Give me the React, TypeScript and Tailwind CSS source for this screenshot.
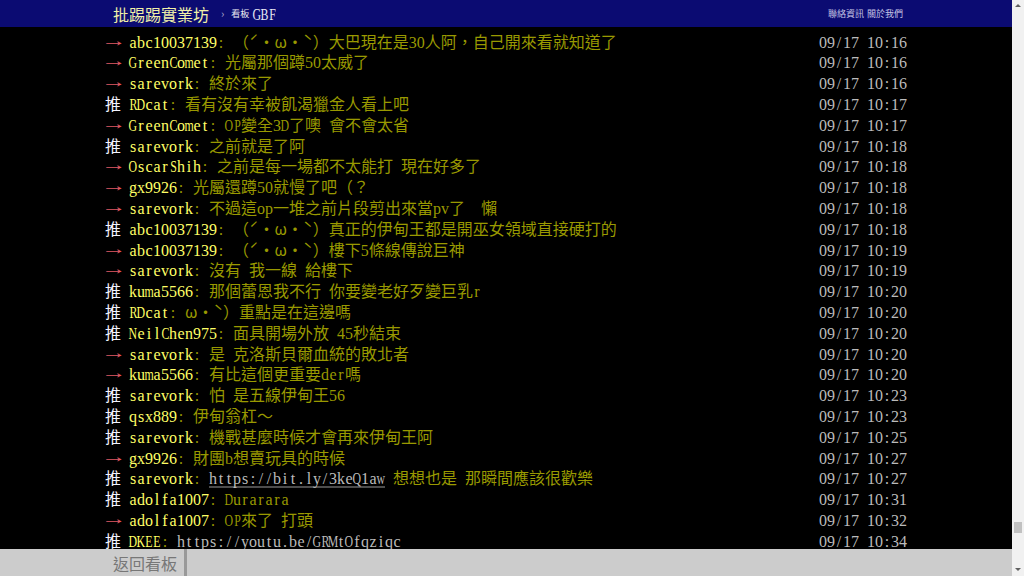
import React from "react";

type Push = { tag: "推" | "→"; user: string; content: string; link?: string; after?: string; time: string };

const rows: Push[] = [
  { tag: "→", user: "abc10037139", content: "（ˊ・ω・ˋ）大巴現在是30人阿，自己開來看就知道了", time: "09/17 10:16" },
  { tag: "→", user: "GreenComet", content: "光屬那個蹲50太威了", time: "09/17 10:16" },
  { tag: "→", user: "sarevork", content: "終於來了", time: "09/17 10:16" },
  { tag: "推", user: "RDcat", content: "看有沒有幸被飢渴獵金人看上吧", time: "09/17 10:17" },
  { tag: "→", user: "GreenComet", content: "OP變全3D了噢 會不會太省", time: "09/17 10:17" },
  { tag: "推", user: "sarevork", content: "之前就是了阿", time: "09/17 10:18" },
  { tag: "→", user: "OscarShih", content: "之前是每一場都不太能打 現在好多了", time: "09/17 10:18" },
  { tag: "→", user: "gx9926", content: "光屬還蹲50就慢了吧（？", time: "09/17 10:18" },
  { tag: "→", user: "sarevork", content: "不過這op一堆之前片段剪出來當pv了  懶", time: "09/17 10:18" },
  { tag: "推", user: "abc10037139", content: "（ˊ・ω・ˋ）真正的伊甸王都是開巫女領域直接硬打的", time: "09/17 10:18" },
  { tag: "→", user: "abc10037139", content: "（ˊ・ω・ˋ）樓下5條線傳說巨神", time: "09/17 10:19" },
  { tag: "→", user: "sarevork", content: "沒有 我一線 給樓下", time: "09/17 10:19" },
  { tag: "推", user: "kuma5566", content: "那個蕾恩我不行 你要變老好歹變巨乳r", time: "09/17 10:20" },
  { tag: "推", user: "RDcat", content: "ω・ˋ）重點是在這邊嗎", time: "09/17 10:20" },
  { tag: "推", user: "NeilChen975", content: "面具開場外放 45秒結束", time: "09/17 10:20" },
  { tag: "→", user: "sarevork", content: "是 克洛斯貝爾血統的敗北者", time: "09/17 10:20" },
  { tag: "→", user: "kuma5566", content: "有比這個更重要der嗎", time: "09/17 10:20" },
  { tag: "推", user: "sarevork", content: "怕 是五線伊甸王56", time: "09/17 10:23" },
  { tag: "推", user: "qsx889", content: "伊甸翁杠～", time: "09/17 10:23" },
  { tag: "推", user: "sarevork", content: "機戰甚麼時候才會再來伊甸王阿", time: "09/17 10:25" },
  { tag: "→", user: "gx9926", content: "財團b想賣玩具的時候", time: "09/17 10:27" },
  { tag: "推", user: "sarevork", content: "", link: "https://bit.ly/3keQ1aw", after: " 想想也是 那瞬間應該很歡樂", time: "09/17 10:27" },
  { tag: "推", user: "adolfa1007", content: "Durarara", time: "09/17 10:31" },
  { tag: "→", user: "adolfa1007", content: "OP來了 打頭", time: "09/17 10:32" },
  { tag: "推", user: "DKEE", content: "", link: "https://youtu.be/GRMtOfqziqc", time: "09/17 10:34" },
];

const WIDE = /[A-Zmw@%]/;

function Half({ c }: { c: string }) {
  if (c === " ") return <span className="inline-block w-[8px]">{"\u00a0"}</span>;
  return (
    <span className="inline-flex w-[8px] justify-center">
      {WIDE.test(c) ? <span className="inline-block scale-x-[0.74]">{c}</span> : c}
    </span>
  );
}

function Txt({ s }: { s: string }) {
  const parts = s.split(/([\x20-\x7e]+)/).filter((p) => p.length > 0);
  return (
    <>
      {parts.map((p, i) =>
        /^[\x20-\x7e]+$/.test(p) ? (
          <span key={i} className="font-['Liberation_Serif'] text-[16px]">
            {p.split("").map((c, j) => (
              <Half key={j} c={c} />
            ))}
          </span>
        ) : (
          <span key={i}>{p}</span>
        )
      )}
    </>
  );
}

function Row({ r }: { r: Push }) {
  return (
    <div className="flex h-[20.8px] items-center justify-between whitespace-pre leading-[20.8px]">
      <div>
        {r.tag === "推" ? (
          <span className="inline-block w-[16px] text-[#f4f4ff]">推</span>
        ) : (
          <span className="inline-flex w-[16px] justify-center font-['Liberation_Serif'] text-[16px] text-[#e05a66]">
            <span className="inline-block translate-x-[1px] -translate-y-[2px] scale-x-[1.6]">→</span>
          </span>
        )}
        <span className="inline-block w-[8px]">{"\u00a0"}</span>
        <span className="text-[#ffff66]">
          <Txt s={r.user} />
        </span>
        <span className="text-[#999900]">
          <Txt s={": " + r.content} />
          {r.link && (
            <span className="inline-block text-[#bbbbbb] shadow-[inset_0_-2.5px_0_#000,inset_0_-3.5px_0_#9a9a9a]">
              <Txt s={r.link} />
            </span>
          )}
          {r.after && <Txt s={r.after} />}
        </span>
      </div>
      <span className="text-[#bbbbbb]">
        <Txt s={" " + r.time} />
      </span>
    </div>
  );
}

export default function App() {
  return (
    <div className="flex h-[576px] w-[1024px] overflow-hidden bg-black font-['Noto_Sans_CJK_TC'] text-[16px]">
      <div className="flex min-w-0 flex-1 flex-col">
        <header className="flex h-[27px] shrink-0 bg-[#0b0b72]">
          <div className="mx-auto flex w-[802px] items-center pl-2 pr-1">
            <span className="text-[16px] text-[#f0f0a8]">批踢踢實業坊</span>
            <span className="ml-[12px] text-[11px] text-[#b0b0d0]">›</span>
            <span className="ml-[7px] text-[9px] text-[#e8e8f0]">看板</span>
            <span className="ml-[3px] text-[#e8e8f4]">
              <Txt s="GBF" />
            </span>
            <div className="ml-auto flex gap-[3px] text-[9px] text-[#c4c4e4]">
              <span>聯絡資訊</span>
              <span>關於我們</span>
            </div>
          </div>
        </header>
        <main className="min-h-0 flex-1 overflow-hidden pt-[4.6px]">
          <div className="mx-auto w-[802px]">
            {rows.map((r, i) => (
              <Row key={i} r={r} />
            ))}
          </div>
        </main>
        <footer className="flex h-[27px] shrink-0 bg-[#cccccc]">
          <div className="mx-auto flex w-[802px]">
            <div className="flex items-center border-r-[3px] border-[#999999] pl-2 pr-[7px] text-[16px] text-[#777777]">
              返回看板
            </div>
          </div>
        </footer>
      </div>
      <div className="flex w-[12px] shrink-0 flex-col items-center bg-[#f1f1f1]">
        <div className="mt-[4px] h-0 w-0 border-x-[3px] border-b-[3px] border-x-transparent border-b-[#606060]" />
        <div className="flex-1" />
        <div className="mb-[10px] h-[11px] w-[8px] bg-[#c1c1c1]" />
        <div className="h-[25px]" />
        <div className="mb-[5px] h-0 w-0 border-x-[3px] border-t-[3px] border-x-transparent border-t-[#606060]" />
      </div>
    </div>
  );
}
